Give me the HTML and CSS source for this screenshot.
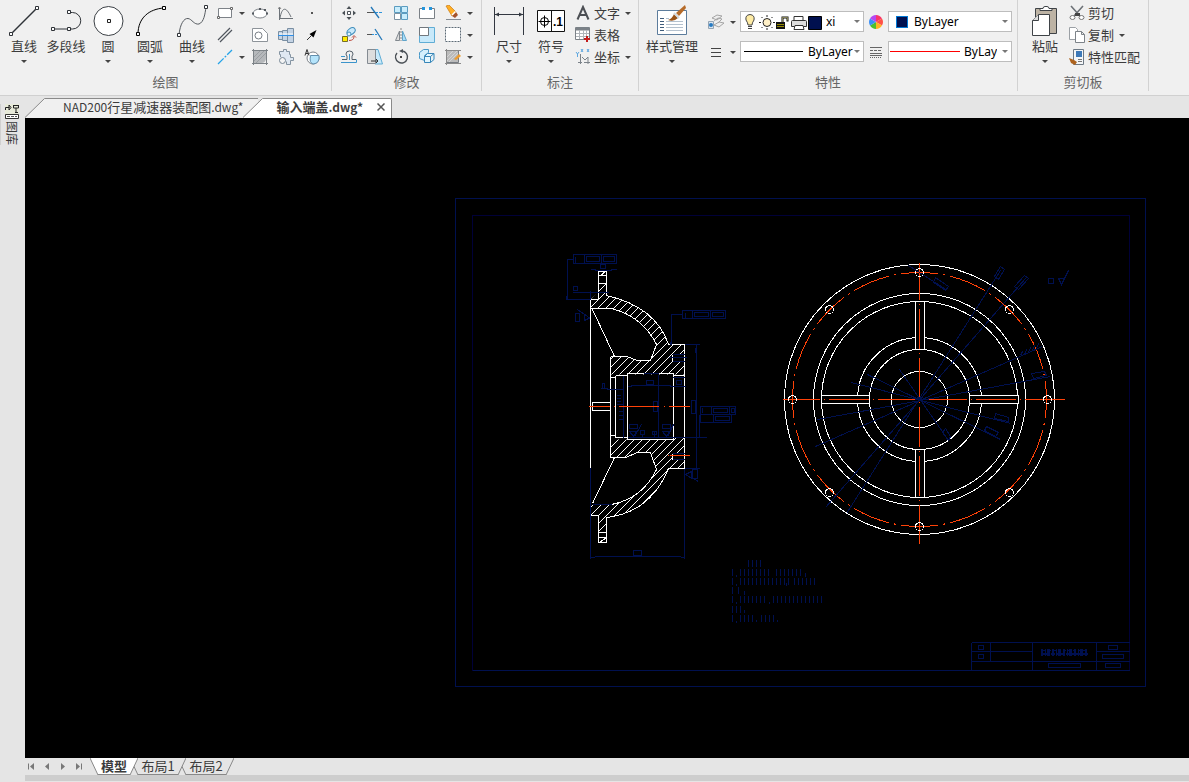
FILE: index.html
```html
<!DOCTYPE html>
<html lang="zh-CN">
<head>
<meta charset="utf-8">
<title>输入端盖.dwg</title>
<link rel="stylesheet" href="styles.css">
</head>
<body>
<div class="app">
<header class="ribbon">
  <section class="group">
    <div class="group-body draw-body">
      <button class="big"><svg class="i34" viewBox="0 0 34 34"><path d="M4 30L30 4" stroke="#2f3338" stroke-width="1.5"/><path d="M2.500 28.500h3v3h-3zM28.500 2.500h3v3h-3z" fill="#fff" stroke="#2f3338"/></svg><span>直线</span><i class="arrow"></i></button>
      <button class="big"><svg class="i34" viewBox="0 0 34 34"><path d="M20 8.500H23.500a8 8 0 0 1 0 16.500H4" fill="none" stroke="#2f3338"/><path d="M18.500 6.500h3v3h-3zM2.500 23.500h3v3h-3zM18.500 23.500h3v3h-3z" fill="#fff" stroke="#2f3338"/></svg><span>多段线</span></button>
      <button class="big"><svg class="i34" viewBox="0 0 34 34"><circle cx="17.500" cy="17" r="14.500" fill="#fff" stroke="#3c4146"/><path d="M16.500 15.500h3v3h-3z" fill="#fff" stroke="#222"/></svg><span>圆</span><i class="arrow"></i></button>
      <button class="big"><svg class="i34" viewBox="0 0 34 34"><path d="M5 30C5 14 16 5 31 4" fill="none" stroke="#000"/><path d="M3.500 28.500h3v3h-3zM29.500 2.500h3v3h-3z" fill="#fff" stroke="#000"/></svg><span>圆弧</span><i class="arrow"></i></button>
      <button class="big"><svg class="i34" viewBox="0 0 34 34"><path d="M4 31C5 20 9 14 13 14.500C17 15 19 21 24 20C29 18 30 10 31 3" fill="none" stroke="#565b60"/><path d="M2.500 29.500h3v3h-3zM29.500 1.500h3v3h-3z" fill="#fff" stroke="#2f3338"/></svg><span>曲线</span><i class="arrow"></i></button>
      <div class="tools draw-tools">
        <button class="tool" aria-label="矩形"><svg class="i16" viewBox="0 0 16 16"><path d="M1.500 3.500h13v9h-13z" fill="#fff" stroke="#7d8288"/><path d="M.5 11.500h2v2h-2zM13.500 2.500h2v2h-2z" fill="#fff" stroke="#666"/></svg><i class="arrow"></i></button>
        <button class="tool" aria-label="椭圆"><svg class="i16" viewBox="0 0 16 16"><ellipse cx="8" cy="8.500" rx="7" ry="4.500" fill="#fff" stroke="#7d8288"/><path d="M0 7.500h2v2H0zM14 7.500h2v2h-2zM7 3h2v2H7zM12 4h2v2h-2z" fill="#555a60"/></svg></button>
        <button class="tool" aria-label="函数曲线"><svg class="i16" viewBox="0 0 16 16"><path d="M1.500 2v13M1 13.500h14M2 13C4 2 8 1 13 12" fill="none" stroke="#6c7278"/><path d="M0 4l1.500-2L3 4" fill="none" stroke="#888"/></svg></button>
        <button class="tool" aria-label="点"><svg class="i16" viewBox="0 0 16 16"><path d="M7 7h2v2H7z" fill="#555"/></svg></button>
        <button class="tool" aria-label="平行线"><svg class="i16" viewBox="0 0 16 16"><path d="M1 13L13 1M3 15L15 3" stroke="#50565e" stroke-width="1.200"/></svg></button>
        <button class="tool" aria-label="轮廓"><svg class="i16" viewBox="0 0 16 16"><path d="M.5 1.500h10l5 5v8H.5z" fill="#fff" stroke="#8d9399"/><circle cx="6.500" cy="8.500" r="3.500" fill="#fff" stroke="#777d84"/></svg></button>
        <button class="tool" aria-label="轴"><svg class="i16" viewBox="0 0 16 16"><path d="M.5 4.500h4v8h-4zM4.500 3.500h5v10h-5zM9.500 1.500h6v14h-6z" fill="#c4d3e4" stroke="#7a8fa3"/><path d="M0 8.500h16" stroke="#2f8fe6"/><path d="M1 7h14" stroke="#fff"/></svg></button>
        <button class="tool" aria-label="箭头"><svg class="i16" viewBox="0 0 16 16"><path d="M12.500 3L5.500 7l4 3.500z" fill="#000"/><path d="M8 8L3 13" stroke="#333"/></svg></button>
        <button class="tool" aria-label="中心线"><svg class="i16" viewBox="0 0 16 16"><path d="M1 15L15 1" stroke="#25a3e8" stroke-width="1.300" stroke-dasharray="8 1.500 2 1.500"/></svg><i class="arrow"></i></button>
        <button class="tool" aria-label="填充"><svg class="i16" viewBox="0 0 16 16"><path d="M2 2h12v12H2z" fill="#b5b8bb"/><path d="M2 8l6-6M2 12L12 2M4 14L14 4" stroke="#9a9ea2"/><path d="M1.500 0v16M14.500 0v16M0 1.500h16M0 14.500h16" stroke="#7c8287"/><path d="M9 14q5 0 5-5v5z" fill="#eee"/></svg></button>
        <button class="tool" aria-label="零件"><svg class="i16" viewBox="0 0 16 16"><path d="M2.500 8V5.500h-1v-3h4v-2h3v2h3v3h1v3h3v3h-3v4h-4v-3" fill="#dfe8f2" stroke="#8594a2"/><circle cx="4.500" cy="11.500" r="3" fill="#f4f4f4" stroke="#778796"/></svg></button>
        <button class="tool" aria-label="局部放大"><svg class="i16" viewBox="0 0 16 16"><circle cx="9" cy="9" r="6" fill="#fff" stroke="#7c8288"/><path d="M6.500 6.500h8.500q1 8-6 8.500-4-1-2.500-8.500" fill="#b5e4fb" stroke="#628fae"/><path d="M1 6.500L3 .500L5 6.500M2 4.500h2" fill="none" stroke="#333"/></svg></button>
      </div>
    </div>
    <h2>绘图</h2>
  </section>

  <section class="group">
    <div class="group-body modify-body">
      <div class="tools modify-tools">
        <button class="tool" aria-label="移动"><svg class="i16" viewBox="0 0 16 16"><path d="M8 1l2.500 3h-5zM8 15l2.500-3h-5zM1 8l3-2.500v5zM15 8l-3-2.500v5z" fill="#4b5157"/><path d="M6.500 6.500h3v3h-3z" fill="#fff" stroke="#4b5157"/></svg></button>
        <button class="tool" aria-label="修剪"><svg class="i16" viewBox="0 0 16 16"><path d="M0 7.500h8" stroke="#555"/><path d="M8 7.500h8" stroke="#2e94dc" stroke-dasharray="3 1"/><path d="M4 2l8 11" stroke="#2478b8" stroke-width="1.300"/></svg></button>
        <button class="tool" aria-label="阵列"><svg class="i16" viewBox="0 0 16 16"><path d="M1.500 1.500h6v6h-6zM8.500 1.500h6v6h-6zM8.500 8.500h6v6h-6z" fill="#c9edfc" stroke="#5b9cc0"/><path d="M1.500 8.500h6v6h-6z" fill="#fff" stroke="#7d92a2"/></svg></button>
        <button class="tool" aria-label="打断"><svg class="i16" viewBox="0 0 16 16"><path d="M5 3.500H.5v10h15v-10H11" fill="#fff" stroke="#7b8187"/><path d="M3 2h3v3H3zM10 2h3v3h-3z" fill="#2495dc"/></svg></button>
        <button class="tool" aria-label="删除"><svg class="i16" viewBox="0 0 16 16"><path d="M1 1l3-1 7 7-4 4z" fill="#ffaf26" stroke="#ca7a13" stroke-width=".700"/><path d="M7 11l4-4 2 3-3 3z" fill="#a4532c"/><path d="M7 10l3.500-3.500" stroke="#fff" stroke-width="1.500"/><path d="M1 14.500h15" stroke="#858c93"/></svg><i class="arrow"></i></button>
        <button class="tool" aria-label="复制对象"><svg class="i16" viewBox="0 0 16 16"><ellipse cx="10.500" cy="4.500" rx="4.500" ry="3" transform="rotate(-35 10 5)" fill="#c9e9fb" stroke="#3f8dbb"/><circle cx="8" cy="7" r="2" fill="#e2f3fd" stroke="#3f8dbb"/><path d="M1.500 9.500h5v5h-5z" fill="#ffeb00" stroke="#746d2b"/><path d="M8 13.500q5 0 5-4m-2 1l2-2 2 2" fill="none" stroke="#be4e42"/></svg></button>
        <button class="tool" aria-label="延伸"><svg class="i16" viewBox="0 0 16 16"><path d="M0 7.500h5" stroke="#555"/><path d="M5 7.500h5" stroke="#2e94dc" stroke-dasharray="2 1"/><path d="M8 2l7 11" stroke="#2478b8" stroke-width="1.300"/></svg></button>
        <button class="tool" aria-label="镜像"><svg class="i16" viewBox="0 0 16 16"><path d="M8 1v13" stroke="#888" stroke-dasharray="2 1"/><path d="M6.500 4v9.500H2.500z" fill="#ddd" stroke="#81888e"/><path d="M9.500 4v9.500h4z" fill="#aaddf8" stroke="#5fa3c9"/></svg></button>
        <button class="tool" aria-label="缩放"><svg class="i16" viewBox="0 0 16 16"><path d="M.5.500h15v15H.5z" fill="#c8e9fa" stroke="#60add5"/><path d="M.5.500h9v8h-9z" fill="#fff" stroke="#71787e"/></svg></button>
        <button class="tool" aria-label="选择"><svg class="i16" viewBox="0 0 16 16"><path d="M.5.500h15v14H.5z" fill="#fff" stroke="#5d6b76" stroke-dasharray="2 1"/></svg><i class="arrow"></i></button>
        <button class="tool" aria-label="偏移"><svg class="i16" viewBox="0 0 16 16"><path d="M1 10.500h5V7q-1-1-1-2 0-3 3.500-3T12 5q0 1-1 2v3.500h4" fill="none" stroke="#56616b"/><path d="M0 13.500h15.500v-3M0 7.500h4M8.500 5v6" fill="none" stroke="#3b94cb"/></svg></button>
        <button class="tool" aria-label="拉伸"><svg class="i16" viewBox="0 0 16 16"><path d="M8 .500h3L15.500 15H8z" fill="#c8e9fa" stroke="#60add5"/><path d="M.5.500h8v14h-8z" fill="#ddd" stroke="#848b92"/><path d="M4 12h7m-2-2l2 2-2 2" fill="none" stroke="#333"/></svg></button>
        <button class="tool" aria-label="旋转"><svg class="i16" viewBox="0 0 16 16"><path d="M9 2A6 6 0 1 1 4 4" fill="none" stroke="#4b5157" stroke-width="1.400"/><path d="M6 2l4-2v4z" fill="#4b5157"/><path d="M7 7h2v2H7z" fill="#444"/></svg></button>
        <button class="tool" aria-label="三维"><svg class="i16" viewBox="0 0 16 16"><path d="M.5 6.500v-3l4-3h5v3l-4 3v5l-5-2z" fill="#d3effc" stroke="#4898c8"/><path d="M5.500 7.500h6v6h-6zM5.500 7.500l3-3h6.500l-3.500 3M15 4.500v6l-3.500 3" fill="#e3f6fe" stroke="#3786b8"/></svg></button>
        <button class="tool" aria-label="编辑填充"><svg class="i16" viewBox="0 0 16 16"><path d="M1.500 1.500h12v12h-12z" fill="#bbb" stroke="#777c82"/><path d="M2 8l6-6M2 12L12 2M4 13l9-9" stroke="#d4d4d4"/><path d="M0 1.500h16M0 14.500h16M1.500 0v16" stroke="#8a8a8a"/><path d="M9 10l5-5 2 2-5 4z" fill="#eb9c31"/></svg><i class="arrow"></i></button>
      </div>
    </div>
    <h2>修改</h2>
  </section>

  <section class="group">
    <div class="group-body note-body">
      <button class="big"><svg class="i34" viewBox="0 0 34 34"><path d="M2.500 3v28M31.500 3v28M3 10.500h28" stroke="#333841"/><path d="M3 10.500l4-2v4zM31 10.500l-4-2v4z" fill="#333841"/></svg><span>尺寸</span><i class="arrow"></i></button>
      <button class="big"><svg class="i34" viewBox="0 0 34 34"><path d="M3.500 6.500h27v21h-27zM17.500 6.500v21" fill="#fff" stroke="#111"/><circle cx="10.500" cy="17.500" r="4" fill="none" stroke="#000"/><path d="M4.500 17.500h12M10.500 11.500v12" stroke="#000"/><text class="mark" x="19" y="22">.1</text></svg><span>符号</span><i class="arrow"></i></button>
      <div class="tools word-tools">
        <button class="tool word"><svg class="i16" viewBox="0 0 16 16"><path d="M2.500 14.500L8 2l5.500 12.500M4.500 10h7" fill="none" stroke="#4c4f54" stroke-width="2"/></svg><span>文字</span><i class="arrow"></i></button>
        <button class="tool word"><svg class="i16" viewBox="0 0 16 16"><path d="M.5.500h14v12H.5z" fill="#fff" stroke="#7b8187"/><path d="M1 2h13" stroke="#7b8187" stroke-width="3"/><path d="M1 6.500h13M1 9.500h13M4.500 3v9M8.500 3v9M11.500 3v9" stroke="#b0b5ba"/><path d="M12 9v6M9 12h6" stroke="#c21c1c" stroke-width="2"/></svg><span>表格</span></button>
        <button class="tool word"><svg class="i16" viewBox="0 0 16 16"><path d="M5.500 5v10M3 13.500h4M7 8l3 3 3-3v7M9 13.500h6" fill="none" stroke="#7c838a"/><path d="M1 3l1.500 2L4 3M2.500 5v3M6 0l2 3M8 0L6 3M12 0l2 3M14 0l-2 3" fill="none" stroke="#3a96dc" stroke-width=".800"/></svg><span>坐标</span><i class="arrow"></i></button>
      </div>
    </div>
    <h2>标注</h2>
  </section>

  <section class="group">
    <div class="group-body prop-body">
      <button class="big wide"><svg class="i34" viewBox="0 0 34 34"><path d="M2.500 6.500h29v24h-29z" fill="#fff" stroke="#5c7c9c"/><path d="M5 14.500h4M5 17.500h4M5 20.500h4M5 23.500h4M5 26.500h4" stroke="#405c7b"/><path d="M11 14.500h3M11 17.500h17M11 20.500h17M11 23.500h17M11 26.500h17" stroke="#b4c1ce"/><path d="M13 16q4-1 6-6l4 4q-4 4-10 2" fill="#9a5316"/><path d="M21 9L30 1l1 3-7 8z" fill="#b66b29"/><path d="M19 9l5 5" stroke="#d2d8dd" stroke-width="2"/></svg><span>样式管理</span><i class="arrow"></i></button>
      <div class="props">
        <button class="tool" aria-label="图层"><svg class="i16" viewBox="0 0 16 16"><path d="M4 4l5-3 5 1-5 4zM6 7l4-3 4 1-4 4M6 11l5-3 5 1-5 4z" fill="#eee" stroke="#a5a5a5"/><path d="M.5 7.500h5v7h-5z" fill="#dbe5ee" stroke="#94a4b4"/><circle cx="3" cy="11" r="2" fill="#277bc2"/></svg><i class="arrow"></i></button>
        <div class="field">
          <select class="pick pick-layer" aria-label="图层"><option>xi</option></select>
          <div class="deco">
            <svg class="layer-icons" viewBox="0 0 82 18">
              <path d="M4 12q0-2-2-5-1-5 4-5.500 5 .500 4 5.500-2 3-2 5z" fill="#ffeca5" stroke="#444"/><path d="M4 13.500h4M4 15.500h4" stroke="#444"/>
              <circle cx="23" cy="9.500" r="4" fill="#fff0c7" stroke="#222"/><path d="M23 2v2M23 15v2M15 9.500h2M29 9.500h2M17.500 4l1 1M28.500 4l-1 1M17.500 15l1-1M28.500 15l-1-1" stroke="#222"/>
              <path d="M32 9h9v7h-9z" fill="#111"/><path d="M33 11.500h7M33 13.500h7" stroke="#938900"/><path d="M38.500 9V4.500h5v4" fill="none" stroke="#111" stroke-width="2"/><path d="M38.500 9V4.500h5v3" fill="none" stroke="#d9d48b" stroke-width=".600"/>
              <path d="M50 7V3.500h9V7" fill="#fff" stroke="#333"/><path d="M47.500 8.500q0-1 1-1h13q1 0 1 1v5h-15z" fill="#ddd" stroke="#333"/><path d="M50 16.500l1-4h8l1 4z" fill="#fff" stroke="#333"/>
              <path d="M64.500 3.500h13v13h-13z" fill="#00104f" stroke="#000"/>
            </svg>
            <i class="arrow grey"></i>
          </div>
        </div>
        <svg class="i16 mid" viewBox="0 0 16 16"><path d="M8 8V1a7 7 0 0 1 6 3.500z" fill="#f9366a"/><path d="M8 8l6-3.500A7 7 0 0 1 14 11.500z" fill="#ff5147"/><path d="M8 8l6 3.500A7 7 0 0 1 8 15z" fill="#ffb321"/><path d="M8 8v7a7 7 0 0 1-6-3.500z" fill="#4bc02f"/><path d="M8 8l-6 3.500a7 7 0 0 1 0-7z" fill="#3a8ff7"/><path d="M8 8L2 4.500A7 7 0 0 1 8 1z" fill="#b548f2"/></svg>
        <div class="field">
          <select class="pick pick-color" aria-label="颜色"><option>ByLayer</option></select>
          <div class="deco"><i class="swatch"></i><i class="arrow grey"></i></div>
        </div>
        <button class="tool" aria-label="线宽"><svg class="i16" viewBox="0 0 16 16"><path d="M3 4.500h10M3 8.500h10M3 12.500h10" stroke="#444"/></svg><i class="arrow"></i></button>
        <div class="field">
          <select class="pick pick-type" aria-label="线型"><option>ByLayer</option></select>
          <div class="deco"><i class="rule"></i><i class="arrow grey"></i></div>
        </div>
        <svg class="i16 mid" viewBox="0 0 16 16"><path d="M2 3.500h12M2 9.500h12M2 11.500h12" stroke="#666"/><path d="M2 6.500h12" stroke="#666" stroke-dasharray="3 1"/><path d="M2 13.500h12" stroke="#666" stroke-dasharray="1 1"/></svg>
        <div class="field">
          <select class="pick pick-weight" aria-label="线宽"><option>ByLayer</option></select>
          <div class="deco"><i class="rule red"></i><i class="arrow grey"></i></div>
        </div>
      </div>
    </div>
    <h2>特性</h2>
  </section>

  <section class="group">
    <div class="group-body clip-body">
      <button class="big"><svg class="i34" viewBox="0 0 34 34"><path d="M7.500 4.500h21v25h-21z" fill="#bdb3a4" stroke="#3f4347"/><path d="M12 6.500V4.500h3q0-2 2-2h2q2 0 2 2h3v2z" fill="#fff" stroke="#3f4347"/><path d="M4.500 16.500l6-6h11v21h-17z" fill="#fff" stroke="#3f4347"/><path d="M4.500 16.500h6v-6" fill="#ddd" stroke="#3f4347"/></svg><span>粘贴</span><i class="arrow"></i></button>
      <div class="tools word-tools">
        <button class="tool word"><svg class="i16" viewBox="0 0 16 16"><path d="M2 1l9 10M14 1L5 11" stroke="#6c7176" stroke-width="1.600"/><path d="M6 8h5v3H6z" fill="#444"/><ellipse cx="3.500" cy="12.500" rx="2.500" ry="2" fill="#fff" stroke="#777"/><ellipse cx="12.500" cy="12.500" rx="2.500" ry="2" fill="#fff" stroke="#777"/></svg><span>剪切</span></button>
        <button class="tool word"><svg class="i16" viewBox="0 0 16 16"><path d="M.5.500h6l2 2v10h-8z" fill="#fff" stroke="#9ba0a5"/><path d="M6.500 4.500h6l3 3v8h-9zM12.500 4.500v3h3" fill="#fff" stroke="#7d8389"/></svg><span>复制</span><i class="arrow"></i></button>
        <button class="tool word"><svg class="i16" viewBox="0 0 16 16"><path d="M4.500.500h10v15h-10z" fill="#f4f6f8" stroke="#6d7985"/><path d="M7 2h6v6H7z" fill="#3d79b8"/><path d="M9 10.500h4M9 12.500h4" stroke="#777"/><path d="M0 9l5 2 3 2-2 3-4-2z" fill="#ad631f"/></svg><span>特性匹配</span></button>
      </div>
    </div>
    <h2>剪切板</h2>
  </section>
</header>

<div class="work">
  <aside class="dock">
    <button class="dock-tab"><svg class="dock-icon" viewBox="0 0 14 15"><path d="M0 0h14v15H0z" fill="#e7ead9"/><path d="M.5 6V3.500h4M4 1l2 2.500L4 6zM8 1.500h6M8.500 2v2h5V2M11 4v4M10 8.500h3" fill="none" stroke="#222"/><path d="M.5 10.500h13v4H.500z" fill="#fff" stroke="#333"/><path d="M2 12.500h10" stroke="#555" stroke-dasharray="3 1"/></svg><span>图库</span></button>
  </aside>
  <main class="stage">
    <nav class="files">
      <button class="file"><svg class="slope" viewBox="0 0 20 20"><path d="M0 20L20 0v20z" fill="#f0f0f0"/><path d="M0 19.500L19.500.500H20" fill="none" stroke="#8a8a8a"/></svg><span class="file-body"><span class="latin">NAD200</span>行星减速器装配图<span class="latin">.dwg*</span></span></button>
      <div class="file active"><svg class="slope" viewBox="0 0 20 20"><path d="M0 20L20 0v20z" fill="#fff"/><path d="M0 19.500L19.500.500H20" fill="none" stroke="#8a8a8a"/></svg><span class="file-body">输入端盖<span class="latin">.dwg*</span><button class="close" aria-label="关闭"><svg viewBox="0 0 8 8"><path d="M.5.500l7 7M7.500.500l-7 7" stroke="#555" stroke-width="1.500"/></svg></button></span></div>
    </nav>
    <div class="canvas">
<svg class="drawing" viewBox="25 118 1164 640" preserveAspectRatio="xMinYMin meet" shape-rendering="crispEdges">
  <defs>
    <clipPath id="section">
      <path d="M598 283V292L590 299V308H611Q642 316 656 344L650 360H637L626 356H610V374H684V344H668Q655 306 606 295V283z"/>
      <path d="M610 435V439H673V437H684V468H668Q650 512 606 517V532H598V515H590V504H611Q642 498 656 469L650 452H637L625 457H610z"/>
    </clipPath>
    <path id="strokes" d="M585 272l110-110M585 280l110-110M585 288l110-110M585 296l110-110M585 304l110-110M585 312l110-110M585 320l110-110M585 328l110-110"/>
  </defs>
  <g transform="translate(.5 .5)" fill="none">
    <g stroke="#00104f">
      <path d="M455 198H1145V686H455z"/>
      <path d="M472 215H1129V670H472z" stroke="#000038"/>
      <path d="M472 670H1129M971 642H1129M971 642V670M990 642V661M1032 642V670M1096 642V670M971 651H1032M1096 651H1129M971 661H1129"/>
      <path d="M978 645h5v4h-5zM978 654h5v4h-5zM1108 645h9v4h-9zM1102 654h21v4h-21zM1048 663h32v4h-32zM1105 663h15v4h-15z"/>
    </g>
    <g stroke="#00104f" transform="translate(-.5 0)">
      <path d="M1041 652H1088" stroke-width="7" stroke-dasharray="2 2 1 1 3 2"/><path d="M1043 650H1088" stroke-dasharray="3 2"/><path d="M1041 653H1088" stroke-width="2" stroke-dasharray="4 1"/>
      <g stroke-width="7">
        <path d="M748 563H762" stroke-dasharray="1 3"/>
        <path d="M732 572H734M740 572H772M776 572H803" stroke-dasharray="1 3"/>
        <path d="M732 581H734M740 581H790M794 581H817" stroke-dasharray="1 3"/>
        <path d="M732 590H742" stroke-dasharray="1 5"/>
        <path d="M732 599H734M740 599H768M773 599H822" stroke-dasharray="1 3"/>
        <path d="M732 609H742" stroke-dasharray="1 3"/>
        <path d="M732 618H734M740 618H754M761 618H774" stroke-dasharray="1 3"/>
      </g>
    </g>
    <path d="M736 574v2M805 572v4M736 583v2M786 582v3M744 590v4M736 601v2M769 601v2M744 609v3M736 620v2M756 619v2M777 619v2" stroke="#00104f"/>

    <g clip-path="url(#section)" stroke="#fff">
      <use href="#strokes" y="0"/><use href="#strokes" y="64"/><use href="#strokes" y="128"/><use href="#strokes" y="192"/><use href="#strokes" y="256"/><use href="#strokes" y="320"/>
    </g>
    <g stroke="#fff">
      <path d="M606 295Q655 306 668 344H684M590 308H611Q642 316 656 344L650 360H637L626 356H610M615 375H627V373H673V375H684"/>
      <path d="M610 435H615V437H627V439H673V437H684M684 468H668Q650 512 606 517V532M598 532V515H590V504M611 504Q642 498 656 469L650 452H637L625 457H610"/>
      <path d="M598 299V271H606V295M598 275H606M598 283H606M600 275L605 271M590 299H598M590 299V467M592 309L614 356M610 356V457M610 377H615M615 375V437M627 373V439M673 373V439M684 344V468M610 402H592V410H610M614 457L592 503M598 532V542H606V532M598 532H606M598 537H606M599 542L606 537"/>
    </g>
    <path d="M672 354H684V361H672zM672 453H684V459H672z" fill="#000"/>
    <path d="M672 354V361M672 453V459M684 344V468" stroke="#fff"/>
    <g stroke="#00104f">
      <path d="M573 254H616V263H573zM584 254V263M601 254V263M575 256V262M586 256H599V261H586zM603 256H614V261H603zM573 259H567V299M565 299H590M566 295V299M600 264H605V268H600zM590 269H594L596 270H610L612 269H616M573 286H577V290H573zM572 292H608M590 290V299"/>
      <path d="M575 313H579V321H575zM577 309L590 318M584 313V320L590 317M682 310H725V318H682zM685 312V317M692 310V318M710 310V318M694 312H708V316H694zM712 312H723V316H712zM682 314H671V344M670 341V344M668 357H686M672 354H684M672 361H684M684 344H699M696 344V468M695 347V352M684 468H699"/>
      <path d="M623 375V437M627 386H630L632 385H669L671 386H685M646 380H653V384H646zM676 380H681V384H676zM658 374V437M653 401H657V411H653zM602 383H604V388H602zM600 388H606L608 389H623M616 395h4M616 398h4M616 401h4M616 404h6M618 411h4M618 415h4M618 419h4M643 373H658M672 377H684"/>
      <path d="M691 400H695V413H691zM700 406H735V414H700zM700 414H731V422H700zM702 407V412M711 406V414M713 408H727V412H713zM729 406V414M731 408H734V412H731zM713 422V414M715 416H729V420H715zM699 414V437M673 437H706M627 437H673M692 469H697V478H692zM685 474L691 471V478zM685 474L698 481"/>
      <path d="M629 424H637V428H629zM629 431H636L633 436zM634 436L641 424M640 430H644V434H640zM642 434V437M662 424H670V428H662zM662 431H669L666 436zM667 436L673 424M652 431h4v3h-4zM654 430V437M590 467V558M684 468V558M590 557H594L595 556H680L681 557H684M633 550H641V555H633zM592 504H611M672 453H684M672 459H684"/>
    </g>
    <g stroke="#ff4208">
      <path d="M588 406H609M613 406h1M618 406H658M663 406h1M668 406H689M667 455h1M669 455H689"/>
    </g>

    <g stroke="#fff">
      <circle cx="919" cy="399" r="135"/><circle cx="919" cy="399" r="106"/><circle cx="919" cy="399" r="98"/><circle cx="919" cy="399" r="62"/><circle cx="919" cy="399" r="50"/><circle cx="919" cy="399" r="28"/>
      <path fill="#000" d="M915 301H924V349H915zM915 449H924V497H915zM821 395H869V403H821zM969 395H1018V403H969z"/>
    </g>
    <g stroke="#ff4208">
      <circle cx="919" cy="399" r="127" pathLength="800" stroke-dasharray="38 5 2 5" stroke-dashoffset="19"/>
      <path d="M919 262V543M782 399H1065" stroke-dasharray="40 4 1 4" stroke-dashoffset="3"/>
    </g>
    <g stroke="#fff">
      <circle cx="919" cy="272" r="4"/><circle cx="919" cy="526" r="4"/><circle cx="792" cy="399" r="4"/><circle cx="1047" cy="399" r="4"/><circle cx="829" cy="309" r="4"/><circle cx="1009" cy="309" r="4"/><circle cx="829" cy="492" r="4"/><circle cx="1009" cy="492" r="4"/>
    </g>
    <g stroke="#00104f">
      <path d="M1000 270L846 513M1025 278L825 507M1042 346L815 446M1050 376L817 419M851 382L1010 423M867 374L1000 439M899 369L948 440M908 265L947 290M914 399h10M917 397l5 5M917 402l5-5"/>
      <path d="M994 276l6-10 4 3-6 10zM1014 286l10-11 4 3-10 11zM935 277l13 9-3 4-12-8zM1031 373l13-2 2 4-13 3zM995 413l13 4v4l-14-3zM986 426l12 6-3 4-11-6zM942 432l3-4 5 8-2 4zM1020 355l2-4M1024 354l2-5M1028 352l2-5M1032 350l2-5M1036 348l2-5"/>
      <path d="M1048 278h5v5h-5zM1058 278H1064L1061 284zM1061 284L1068 270"/>
    </g>
  </g>
</svg>
    </div>
    <footer class="sheets">
      <div class="steps">
        <button class="step" aria-label="第一页"><svg viewBox="0 0 8 8"><path d="M1.500 1v6" stroke="#777"/><path d="M7 .500v7L3 4z" fill="#777"/></svg></button>
        <button class="step" aria-label="上一页"><svg viewBox="0 0 8 8"><path d="M6 .500v7L2 4z" fill="#777"/></svg></button>
        <button class="step" aria-label="下一页"><svg viewBox="0 0 8 8"><path d="M2 .500v7L6 4z" fill="#777"/></svg></button>
        <button class="step" aria-label="最后页"><svg viewBox="0 0 8 8"><path d="M6.500 1v6" stroke="#777"/><path d="M1 .500v7L5 4z" fill="#777"/></svg></button>
      </div>
      <button class="sheet current"><svg viewBox="0 0 8 17"><path d="M0 0h8v17z" fill="#fff"/><path d="M0 0l8 17" stroke="#888"/></svg><span>模型</span><svg viewBox="0 0 8 17"><path d="M0 0h8L0 17z" fill="#fff"/><path d="M8 0L0 17" stroke="#888"/></svg></button>
      <button class="sheet second"><svg viewBox="0 0 8 17"><path d="M0 0h8v17z" fill="#e5e5e5"/><path d="M0 0l8 17" stroke="#888"/></svg><span>布局1</span><svg viewBox="0 0 8 17"><path d="M0 0h8L0 17z" fill="#e5e5e5"/><path d="M8 0L0 17" stroke="#888"/></svg></button>
      <button class="sheet"><svg viewBox="0 0 8 17"><path d="M0 0h8v17z" fill="#e5e5e5"/><path d="M0 0l8 17" stroke="#888"/></svg><span>布局2</span><svg viewBox="0 0 8 17"><path d="M0 0h8L0 17z" fill="#e5e5e5"/><path d="M8 0L0 17" stroke="#888"/></svg></button>
    </footer>
    <div class="strip"></div>
  </main>
</div>
</div>
</body>
</html>
```
FILE: styles.css
```css
* { box-sizing: border-box; }

body {
  margin: 0;
  background: #e5e5e5;
  color: #3c3c3c;
  font: 13px/16px "Noto Sans CJK SC", "Noto Sans", sans-serif;
}

button {
  margin: 0;
  padding: 0;
  border: 0;
  background: none;
  color: inherit;
  font: inherit;
}

svg { display: block; flex: none; }

.app { display: flex; flex-direction: column; height: 100vh; }

/* Ribbon */
.ribbon {
  display: flex;
  flex: none;
  padding-bottom: 4px;
  border-bottom: 1px solid #d0d0d0;
  background: #f0f0f0;
  overflow: hidden;
}
.group {
  display: flex;
  flex: none;
  flex-direction: column;
  border-right: 1px solid #d2d2d2;
}
.group h2 {
  margin: 0;
  padding: 2px 0 1px;
  color: #666;
  font-size: 13px;
  font-weight: 400;
  line-height: 16px;
  text-align: center;
}
.group-body { display: flex; height: 72px; }
.draw-body { padding: 0 1px 0 3px; }
.modify-body { padding-left: 9px; }
.note-body { padding: 0 7px 0 6px; }
.prop-body { padding: 0 5px 0 4px; }
.clip-body { padding: 0 8px 0 6px; }

.big {
  display: flex;
  flex-direction: column;
  align-items: center;
  width: 42px;
  padding-top: 4px;
  white-space: nowrap;
}
.wide { width: 58px; }
.i34 { width: 34px; height: 34px; }
.i16 { width: 16px; height: 16px; }
.mark { font: bold 12px "Liberation Sans", sans-serif; fill: #000; }

.arrow {
  flex: none;
  width: 0;
  border: 3px solid transparent;
  border-top-color: #444;
  border-bottom: 0;
}
.big .arrow { margin-top: 6px; }
.big .grey, .grey { border-top-color: #777; }

.tools { display: grid; grid-auto-rows: 22px; padding-top: 2px; }
.tool { display: flex; align-items: center; gap: 6px; }
.draw-tools { grid-template-columns: 35px 26px 26px 26px; padding-left: 4px; }
.modify-tools { grid-template-columns: repeat(4, 26px) 36px; }
.word-tools { padding-left: 3px; }
.word { gap: 3px; }
.word .arrow { margin-left: 2px; }

.props {
  display: grid;
  grid-template-columns: 28px 124px 16px 124px;
  grid-auto-rows: 22px;
  gap: 8px 4px;
  padding: 11px 0 0 7px;
}
.mid { align-self: center; }
.field { display: grid; }
.pick, .deco { grid-area: 1 / 1; min-width: 0; }
.pick {
  width: 100%;
  height: 21px;
  border: 1px solid #bdbdbd;
  border-radius: 0;
  background: #fff;
  color: #000;
  font: 12px/19px "Noto Sans", sans-serif;
  appearance: none;
}
.pick-layer { padding: 0 14px 0 85px; }
.pick-color { padding: 0 14px 0 25px; }
.pick-type { padding: 0 10px 0 67px; }
.pick-weight { padding: 0 14px 0 75px; }
.deco {
  display: flex;
  align-items: center;
  height: 21px;
  padding: 0 4px;
  pointer-events: none;
}
.deco .arrow { margin-left: auto; }
.layer-icons { width: 82px; height: 18px; }
.swatch {
  width: 12px;
  height: 12px;
  margin-left: 4px;
  border: 1px solid #0078d4;
  background: #00104f;
}
.rule { width: 59px; height: 1px; background: #000; }
.red { width: 70px; margin-left: -2px; background: #f00; }

/* Work area */
.work { display: flex; flex: 1; min-height: 0; }
.dock { flex: none; width: 25px; padding-top: 8px; }
.dock-tab {
  display: flex;
  flex-direction: column;
  align-items: center;
  gap: 2px;
  width: 22px;
  border-left: 1px solid #d0d0d0;
  font-size: 12px;
  line-height: 16px;
}
.dock-tab span { writing-mode: vertical-rl; text-orientation: sideways; }
.dock-icon { width: 14px; height: 15px; }

.stage { display: flex; flex: 1; flex-direction: column; min-width: 0; }
.files { display: flex; flex: none; height: 22px; padding-top: 2px; }
.file { display: flex; height: 20px; }
.slope { width: 20px; height: 20px; }
.file-body {
  display: flex;
  align-items: center;
  height: 20px;
  padding: 0 15px 3px 18px;
  border-top: 1px solid #8a8a8a;
  background: #f0f0f0;
  white-space: nowrap;
}
.latin { font-size: 12px; }
.active { z-index: 1; margin-left: -15px; font-weight: 700; }
.active .file-body {
  padding: 0 6px 3px 13px;
  border-right: 1px solid #8a8a8a;
  border-top-right-radius: 2px;
  background: #fff;
}
.close { margin-left: 14px; }
.close svg { width: 8px; height: 8px; }

.canvas { flex: 1; min-height: 0; background: #000; }
.drawing { width: 100%; height: 100%; }

.sheets { display: flex; flex: none; height: 17px; }
.steps { display: flex; gap: 8px; padding-left: 2px; margin-right: 7px; }
.step { display: flex; align-items: center; }
.step svg { width: 8px; height: 17px; }
.sheet { display: flex; height: 17px; margin-right: -8px; }
.sheet svg { width: 8px; height: 17px; }
.sheet span {
  min-width: 32px;
  padding: 0 2px;
  border-bottom: 1px solid #888;
  line-height: 15px;
  text-align: center;
}
.current { z-index: 2; font-weight: 700; }
.current span { background: #fff; }
.second { z-index: 1; }
.second span, .second + .sheet span { min-width: 40px; }
.strip { flex: none; height: 6px; margin-bottom: 1px; background: #cdcdcd; }
```
